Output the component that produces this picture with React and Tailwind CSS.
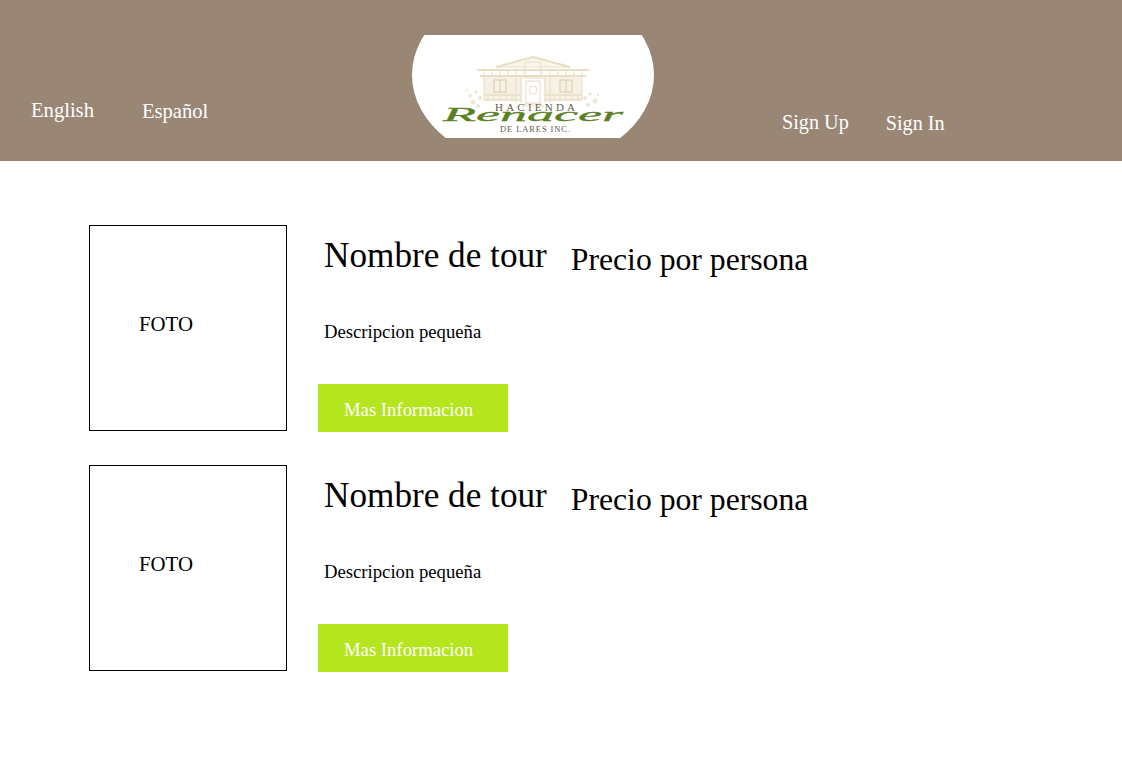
const Logo = () => (
  <svg width="242" height="103" viewBox="0 0 242 103" className="block">
    {/* white badge, an oval cut flat on top and bottom by the svg box */}
    <ellipse cx="121" cy="40" rx="121" ry="91" fill="#fff" />
    {/* house */}
    <g fill="#f6f1e4" stroke="none">
      <path d="M84 32 L121 22 L158 32 Z" fill="#faf6ec" />
      <rect x="72" y="41" width="98" height="24" />
      <rect x="110" y="44" width="22" height="24" fill="#fff" />
      <path d="M114 68 H128 L132 72 H110 Z" />
    </g>
    <g fill="none" stroke="#e8dec4" strokeWidth="1">
      <path d="M84 32 L121 22 L158 32" strokeWidth="2" />
      <path d="M65 35 H177 M68 41 H174" strokeWidth="2" />
      <path d="M84 32 H158" />
      <path d="M72 35 V41 M80 35 V41 M88 35 V41 M96 35 V41 M104 35 V41 M112 35 V41 M130 35 V41 M138 35 V41 M146 35 V41 M154 35 V41 M162 35 V41 M170 35 V41" />
      <rect x="113" y="27" width="16" height="15" />
      <path d="M72 41 V65 M170 41 V65 M104 41 V68 M109 41 V68 M133 41 V68 M138 41 V68" />
      <rect x="82" y="45" width="12" height="12" stroke="#d8cba8" />
      <path d="M88 45 V57" stroke="#d8cba8" />
      <rect x="148" y="45" width="12" height="12" stroke="#d8cba8" />
      <path d="M154 45 V57" stroke="#d8cba8" />
      <rect x="114" y="46" width="14" height="22" />
      <circle cx="121" cy="55" r="4" />
      <path d="M72 60 H109 M72 65 H109 M133 60 H170 M133 65 H170" strokeWidth="1.5" />
      <path d="M76 60 V65 M82 60 V65 M88 60 V65 M94 60 V65 M100 60 V65 M142 60 V65 M148 60 V65 M154 60 V65 M160 60 V65 M166 60 V65" />
      <path d="M114 68 L111 72 M128 68 L131 72" />
    </g>
    <g fill="#efe7d5">
      <circle cx="58" cy="61" r="2" />
      <circle cx="64" cy="57" r="1.5" />
      <circle cx="61" cy="67" r="2.5" />
      <circle cx="68" cy="63" r="2" />
      <circle cx="55" cy="55" r="1.2" />
      <circle cx="66" cy="71" r="2" />
      <circle cx="176" cy="70" r="2" />
      <circle cx="183" cy="66" r="2.5" />
      <circle cx="178" cy="59" r="1.5" />
      <circle cx="186" cy="60" r="1.2" />
      <circle cx="173" cy="63" r="2" />
    </g>
    <text x="83" y="76" textLength="80" fontFamily="'Liberation Serif', serif" fontSize="11" fill="#5f5b45">
      HACIENDA
    </text>
    <text x="31" y="86" textLength="180" lengthAdjust="spacingAndGlyphs" fontFamily="'Liberation Serif', serif" fontStyle="italic" fontSize="19" stroke="#5b7f24" strokeWidth="0.3" fill="#5b7f24">
      Renacer
    </text>
    <text x="88" y="97" textLength="70" fontFamily="'Liberation Serif', serif" fontSize="8.5" fill="#5f5b45">
      DE LARES INC.
    </text>
  </svg>
);

const TourRow = () => (
  <div className="flex h-[206px]">
    <div className="w-[198px] h-[206px] border border-black flex items-center pl-[49px] pb-[8px] text-[20.8px] text-black">
      FOTO
    </div>
    <div className="ml-[31px] w-[500px]">
      <div className="flex items-start pt-[8px] pl-[6px]">
        <h2 className="text-[35.2px] leading-[46px] font-normal text-black whitespace-nowrap">Nombre de tour</h2>
        <h3 className="ml-[24px] mt-[3px] text-[31.7px] leading-[48px] font-normal text-black whitespace-nowrap">Precio por persona</h3>
      </div>
      <p className="mt-[35px] pl-[6px] text-[18.7px] leading-[26px] text-black">Descripcion pequeña</p>
      <button className="mt-[39px] w-[190px] h-[48px] bg-[#b5e61d] text-white text-[18.7px] text-left pl-[26px] pt-[4px] block">
        Mas Informacion
      </button>
    </div>
  </div>
);

export default function App() {
  return (
    <div className="min-h-[773px] bg-white font-['Liberation_Serif',serif]">
      <header className="h-[161px] bg-[#998675] flex text-white leading-[24px]">
        <nav className="w-[412px] flex gap-[48px] pl-[31px] pt-[98px] text-[20.6px]">
          <a>English</a>
          <a className="mt-[1px]">Español</a>
        </nav>
        <div className="pt-[35px]">
          <Logo />
        </div>
        <nav className="flex gap-[37px] pl-[128px] pt-[110px] text-[20.2px]">
          <a>Sign Up</a>
          <a className="mt-[1px]">Sign In</a>
        </nav>
      </header>
      <main className="pl-[89px] pt-[64px] flex flex-col gap-[34px]">
        <TourRow />
        <TourRow />
      </main>
    </div>
  );
}
